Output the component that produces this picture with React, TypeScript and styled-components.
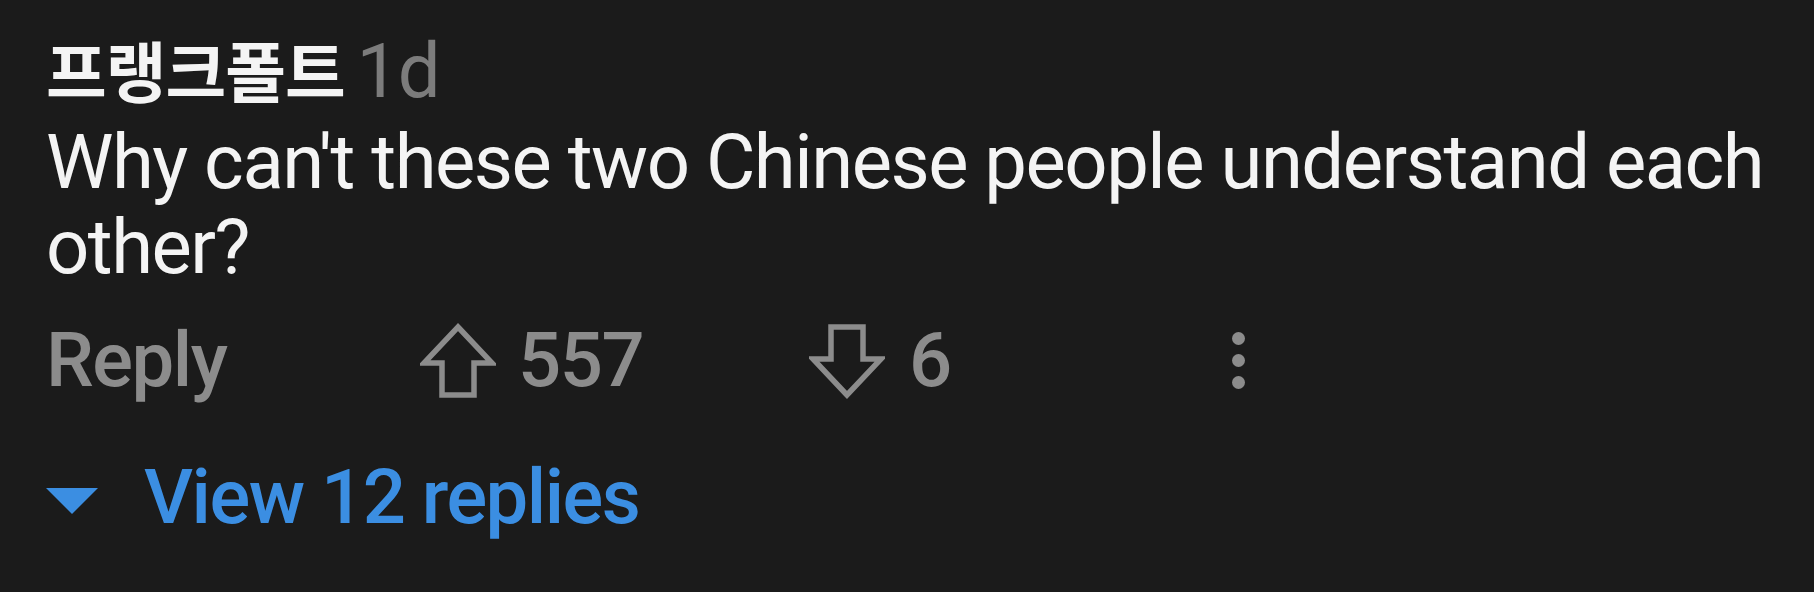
import styled, { createGlobalStyle } from "styled-components";

const GlobalStyle = createGlobalStyle`
  html, body {
    margin: 0;
    padding: 0;
    background: #1b1b1b;
  }
  body {
    font-family: Roboto, "Noto Sans CJK KR", sans-serif;
  }
`;

const Comment = styled.div`
  width: 1814px;
  height: 592px;
  box-sizing: border-box;
  padding: 26px 0 0 46px;
  background: #1b1b1b;
  overflow: hidden;
  letter-spacing: -1.5px;
`;

const Header = styled.div`
  display: flex;
  align-items: baseline;
  gap: 12px;
  font-size: 76px;
  line-height: 85px;
`;

const Author = styled.span`
  font-family: "Noto Sans CJK KR", sans-serif;
  font-weight: 700;
  color: #f4f4f4;
  font-size: 66px;
  letter-spacing: -1px;
`;

const Time = styled.span`
  color: #7c7c7c;
  font-weight: 400;
`;

const Body = styled.p`
  margin: 6px 0 0;
  width: 1760px;
  color: #f4f4f4;
  font-size: 76px;
  line-height: 85px;
  font-weight: 400;
`;

const Actions = styled.div`
  display: grid;
  grid-template-columns: 374px 389px 423px auto;
  align-items: center;
  margin-top: 28px;
  height: 85px;
  color: #8c8c8c;
  font-size: 76px;
  font-weight: 500;
`;

const ActionText = styled.span`
  line-height: 85px;
`;

const Vote = styled.div<{ $gap: number }>`
  display: flex;
  align-items: center;
  gap: ${(p) => p.$gap}px;
`;

const MoreDots = styled.div`
  display: flex;
  flex-direction: column;
  gap: 9px;

  span {
    width: 13px;
    height: 13px;
    border-radius: 50%;
    background: #8c8c8c;
  }
`;

const ViewReplies = styled.div`
  display: flex;
  align-items: center;
  gap: 46px;
  margin-top: 52px;
  color: #3b8ee2;
  font-size: 76px;
  line-height: 85px;
  font-weight: 500;
`;

const Caret = styled.span`
  width: 0;
  height: 0;
  margin-top: 6px;
  border-left: 26px solid transparent;
  border-right: 26px solid transparent;
  border-top: 26px solid #3b8ee2;
`;

function ArrowIcon({ down = false }: { down?: boolean }) {
  return (
    <svg
      width="76"
      height="76"
      viewBox="0 0 76 76"
      style={{ transform: down ? "rotate(180deg)" : undefined }}
    >
      <path
        d="M38 4 L72 40 L54 40 L54 72 L22 72 L22 40 L4 40 Z"
        fill="none"
        stroke="#8c8c8c"
        strokeWidth="5.5"
        strokeLinejoin="miter"
      />
    </svg>
  );
}

export default function App() {
  return (
    <>
      <GlobalStyle />
      <Comment>
        <Header>
          <Author>프랭크폴트</Author>
          <Time>1d</Time>
        </Header>
        <Body>Why can't these two Chinese people understand each other?</Body>
        <Actions>
          <ActionText>Reply</ActionText>
          <Vote $gap={22}>
            <ArrowIcon />
            <ActionText>557</ActionText>
          </Vote>
          <Vote $gap={24}>
            <ArrowIcon down />
            <ActionText>6</ActionText>
          </Vote>
          <MoreDots>
            <span />
            <span />
            <span />
          </MoreDots>
        </Actions>
        <ViewReplies>
          <Caret />
          <span>View 12 replies</span>
        </ViewReplies>
      </Comment>
    </>
  );
}
